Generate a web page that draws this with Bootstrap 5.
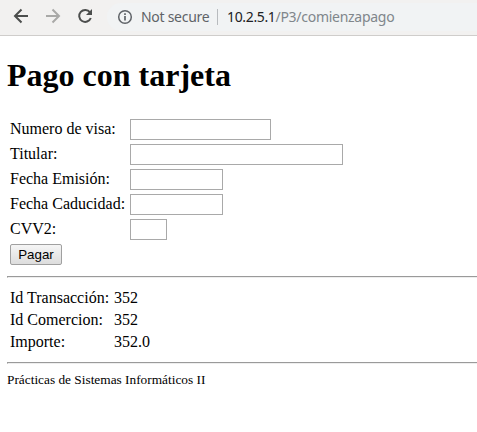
<!DOCTYPE html>
<html lang="es">
<head>
<meta charset="utf-8">
<meta name="viewport" content="width=device-width, initial-scale=1">
<title>Pago con tarjeta</title>
<link href="https://cdn.jsdelivr.net/npm/bootstrap@5.3.0/dist/css/bootstrap.min.css" rel="stylesheet">
<style>
body { font-family: "Liberation Serif", "Times New Roman", serif; font-size: 16px; line-height: 20px; color: #000; background: #fff; }
.toolbar { height: 36px; background: #f2f1f0; border-bottom: 1px solid #cfcdcb; padding-left: 13px; }
.tool-icons { gap: 16px; width: 94px; margin-top: -3px; }
.omnibox { height: 28px; background: #f1f3f4; border-radius: 14px 0 0 14px; padding-left: 10px; margin-top: -1px; font: 14px/28px "Noto Sans", sans-serif; color: #5f6368; white-space: nowrap; }
.omnibox svg { margin-right: 8px; }
.security { width: 76px; letter-spacing: -.28px; }
.divider { width: 1px; height: 16px; background: #b8bbbe; margin-right: 9px; }
.address { color: #80868b; letter-spacing: -.28px; }
.address .host { color: #202124; letter-spacing: -.35px; }
.page { padding-left: 7px; }
h1.title { font-size: 32px; line-height: 37px; font-weight: 700; margin: 21px 0 25px; }
.field-row { height: 21px; margin-bottom: 4px; }
.field-row label { width: 120px; line-height: 20px; }
.form-area, .details { padding-left: 3px; }
.entry { height: 21px; border: 1px solid #a9a9a9; border-radius: 0; padding: 1px; background: #fff; }
.w-visa { width: 141px; }
.w-name { width: 213px; }
.w-date { width: 93px; }
.w-cvv { width: 37px; }
.pay { width: 52px; height: 21px; padding: 0; border: 1px solid #a0a0a0; border-radius: 2px; background: linear-gradient(#f5f5f5, #dddddd); color: #000; font: 13.333px/17px "Liberation Sans", Arial, sans-serif; }
.rule { height: 2px; border-top: 1px solid #9a9a9a; border-bottom: 1px solid #eeeeee; border-left: 1px solid #9a9a9a; }
.form-area { margin-bottom: 11px; }
.details { padding-top: 10px; padding-bottom: 10px; }
.details dl { display: grid; grid-template-columns: 104px auto; row-gap: 2px; margin: 0; }
.details dt { font-weight: 400; }
.details dd { margin: 0; }
.credits { font-size: 13.333px; line-height: 15px; padding-top: 8px; }
</style>
</head>
<body>
<header class="toolbar d-flex align-items-center overflow-hidden">
  <div class="tool-icons d-flex flex-shrink-0 align-items-center">
    <svg width="16" height="16" viewBox="0 0 16 16" fill="none" stroke="#4c4e4d" stroke-width="2"><path d="M15 8H2.500M8.500 1.500L2 8l6.500 6.500"/></svg>
    <svg width="16" height="16" viewBox="0 0 16 16" fill="none" stroke="#a9a9a7" stroke-width="2"><path d="M1 8h12.500M7.500 1.500L14 8l-6.500 6.500"/></svg>
    <svg width="16" height="16" viewBox="0 0 16 16" fill="none" stroke="#4c4e4d" stroke-width="2"><path d="M13 4.300A6 6 0 1 0 13.800 10"/><path d="M15 1v6H9z" fill="#4c4e4d" stroke="none"/></svg>
  </div>
  <div class="omnibox d-flex align-items-center flex-grow-1">
    <svg width="16" height="16" viewBox="0 0 16 16" fill="none" stroke="#5f6368" stroke-width="1.500"><circle cx="8" cy="8" r="6.300"/><path d="M8 7v4.500M8 4.300v1.700" stroke-width="1.700"/></svg>
    <span class="security">Not secure</span>
    <span class="divider"></span>
    <span class="address"><span class="host">10.2.5.1</span>/P3/comienzapago</span>
  </div>
</header>
<main class="page">
  <h1 class="title">Pago con tarjeta</h1>
  <form class="form-area">
    <div class="field-row d-flex"><label for="visa">Numero de visa:</label><input id="visa" class="entry w-visa" type="text"></div>
    <div class="field-row d-flex"><label for="titular">Titular:</label><input id="titular" class="entry w-name" type="text"></div>
    <div class="field-row d-flex"><label for="emision">Fecha Emisión:</label><input id="emision" class="entry w-date" type="text"></div>
    <div class="field-row d-flex"><label for="caducidad">Fecha Caducidad:</label><input id="caducidad" class="entry w-date" type="text"></div>
    <div class="field-row d-flex"><label for="cvv">CVV2:</label><input id="cvv" class="entry w-cvv" type="text"></div>
    <button class="pay d-block" type="button">Pagar</button>
  </form>
  <div class="rule" role="separator"></div>
  <section class="details">
    <dl>
      <dt>Id Transacción:</dt><dd>352</dd>
      <dt>Id Comercion:</dt><dd>352</dd>
      <dt>Importe:</dt><dd>352.0</dd>
    </dl>
  </section>
  <div class="rule" role="separator"></div>
  <footer class="credits">Prácticas de Sistemas Informáticos II</footer>
</main>
<script src="https://cdn.jsdelivr.net/npm/bootstrap@5.3.0/dist/js/bootstrap.bundle.min.js"></script>
</body>
</html>
